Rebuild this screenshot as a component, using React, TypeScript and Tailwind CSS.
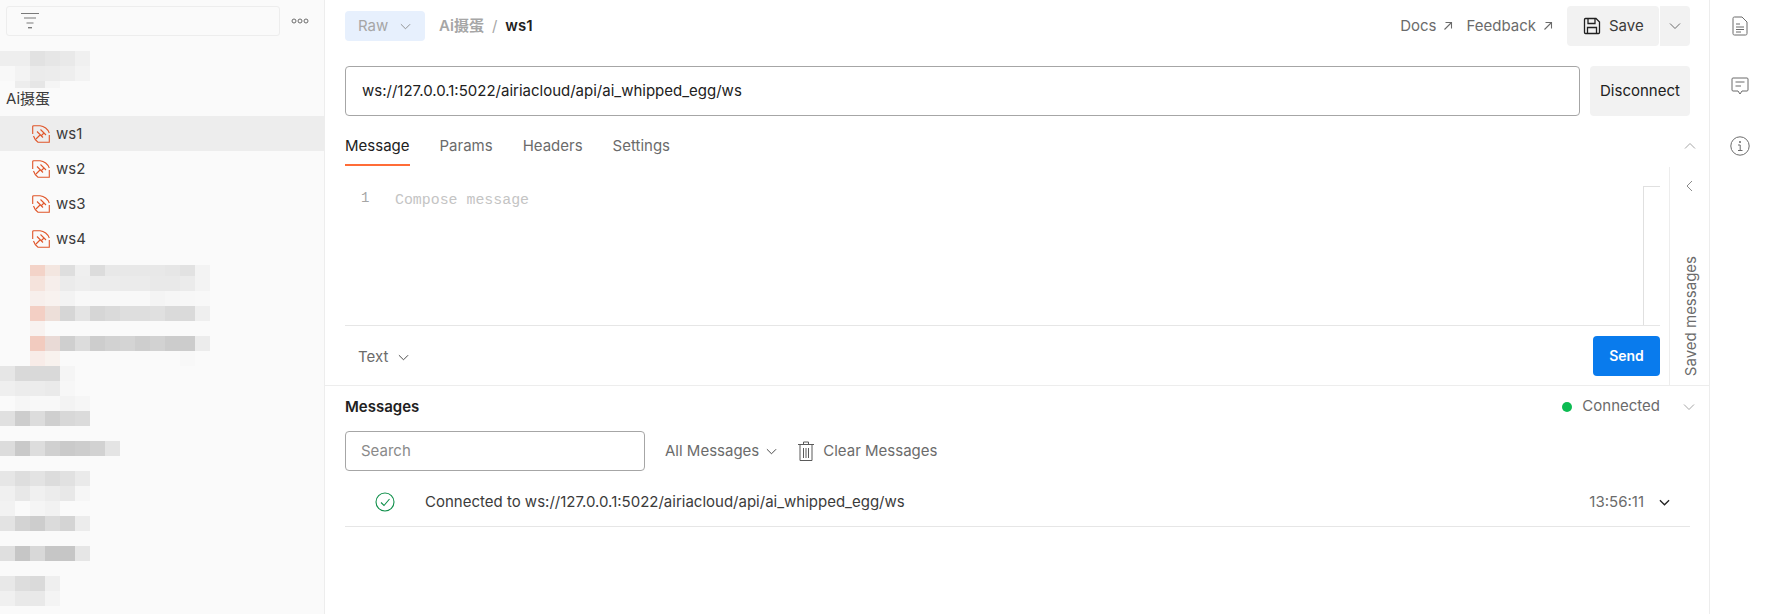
import React from "react";

const sans = "font-['Inter','Noto_Sans_CJK_SC',sans-serif]";

function Mosaic({ rows, x0, w, h, cell }: { rows: [number, number, string[]][]; x0: number; w: number; h: number; cell: number }) {
  return (
    <svg width={w} height={h} className="block shrink-0">
      {rows.map(([y, rh, cs], i) =>
        cs.map((c, j) => <rect key={i + "-" + j} x={x0 + j * cell} y={y} width={cell} height={rh} fill={c} />)
      )}
    </svg>
  );
}

const WsIcon = () => (
  <svg width="18" height="18" viewBox="0 0 18 18" fill="none" stroke="#e0562a" strokeWidth="1.1" className="shrink-0">
    <path d="M.7 9V1.7C.7 1 1 .7 1.7 .7H8C12 1 16 4 17.3 8" />
    <path d="M1.5 11C2.5 14 4 16 6 17.3H17.3V10" />
    <path d="M4 14L8 10M5 6.5L11 12.5M8.5 4.5L14 10M9 11L12 8" />
  </svg>
);

const Chevron = ({ size = 12, color = "#6b6b6b", up = false, left = false, sw = 1 }: { size?: number; color?: string; up?: boolean; left?: boolean; sw?: number }) => (
  <svg width={size} height={size} viewBox="0 0 12 12" fill="none" stroke={color} strokeWidth={sw} className="shrink-0">
    {left ? <path d="M8 1L3 6L8 11" /> : up ? <path d="M1 8.5L6 3.5L11 8.5" /> : <path d="M1 3.5L6 8.5L11 3.5" />}
  </svg>
);

const Arrow = () => (
  <svg width="10" height="10" viewBox="0 0 10 10" fill="none" stroke="#6b6b6b" strokeWidth="1.1" className="shrink-0">
    <path d="M1.5 8.5L8.5 1.5M2.5 1.5H8.5V7.5" />
  </svg>
);

const topRows: [number, number, string[]][] = [
  [0, 15, ["#eeeeee", "#eeeeee", "#e2e2e2", "#e6e6e6", "#e9e9e9", "#f0f0f0"]],
  [15, 15, ["#f8f8f8", "#f3f3f3", "#ebebeb", "#ececec", "#eeeeee", "#f3f3f3"]],
  [30, 7, ["#fafafa", "#ededed", "#e6e6e6", "#f5f5f5", "#fafafa", "#fafafa"]],
];

const p = (s: string) => s.split(" ").map((c) => "#" + c);

const midRows: [number, number, string[]][] = [
  [9, 11, p("f3d3c8 f3e6e0 dedede efefef dcdcdc e8e8e8 e8e8e8 e8e8e8 e8e8e8 e6e6e6 e2e2e2 f3f3f3")],
  [20, 15, p("f5e3dc f6eeeb ebebeb eeeeee ececec ececec ebebeb ebebeb e9e9e9 e9e9e9 ebebeb f3f3f3")],
  [35, 15, p("f7efec f8f2ef f3f3f3 f8f8f8 f8f8f8 f8f8f8 f8f8f8 f8f8f8 f4f4f4 f6f6f6 f7f7f7 f8f8f8")],
  [50, 15, p("f3cfc4 eddfd9 d6d6d6 e4e4e4 d6d6d6 dadada dedede dedede e0e0e0 dadada dadada efefef")],
  [65, 15, p("f8f2f0 fafafa fafafa fafafa fafafa fafafa fafafa fafafa fafafa fafafa fafafa fafafa")],
  [80, 15, p("f2cbbf e9dad6 cfcfcf dcdcdc cdcdcd d2d2d2 d4d4d4 cecece d2d2d2 cccccc cccccc ececec")],
  [95, 15, p("f8ece8 f8f2ee fafafa fafafa fafafa fafafa fafafa fafafa fafafa fafafa f8f8f8 fafafa")],
];

const lowRows: [number, number, string[]][] = [
  [110, 15, p("e6e6e6 d9d9d9 d9d9d9 d9d9d9 f5f5f5")],
  [125, 15, p("efefef ececec ececec eaeaea f7f7f7")],
  [140, 15, p("fafafa f6f6f6 f8f8f8 f8f8f8 f3f3f3 f6f6f6")],
  [155, 15, p("e0e0e0 cdcdcd dcdcdc cfcfcf d8d8d8 dbdbdb")],
  [185, 15, p("dcdcdc c9c9c9 dddddd d0d0d0 cacaca cdcdcd d2d2d2 e4e4e4")],
  [215, 15, p("e6e6e6 dedede e3e3e3 dcdcdc e1e1e1 eaeaea")],
  [230, 15, p("f0f0f0 e8e8e8 f0f0f0 ececec e8e8e8 f6f6f6")],
  [245, 15, p("f2f2f2 fafafa f5f5f5 f2f2f2 fafafa")],
  [260, 15, p("e3e3e3 d3d3d3 cdcdcd dbdbdb d4d4d4 ececec")],
  [290, 15, p("dfdfdf c6c6c6 d8d8d8 c6c6c6 c6c6c6 e6e6e6")],
  [320, 15, p("e8e8e8 dddddd dadada efefef")],
  [335, 15, p("f0f0f0 e9e9e9 e9e9e9 f4f4f4")],
];

function Sidebar() {
  return (
    <aside className="w-[325px] shrink-0 h-full flex flex-col bg-[#fafafa] border-r border-[#ededed] overflow-hidden">
      <div className="flex items-center pt-[6px] pl-[6px]">
        <div className="w-[274px] h-[30px] border border-[#ededed] rounded-[3px] flex items-center pl-[14px]">
          <svg width="18" height="16" viewBox="0 0 18 16" fill="none" stroke="#7a7a7a" strokeWidth="1">
            <path d="M0 .5H18M3 5H15M5.5 10H12.5" />
            <path d="M7 14.7H11" strokeWidth="1.4" />
          </svg>
        </div>
        <svg width="18" height="6" viewBox="0 0 18 6" fill="none" stroke="#6b6b6b" className="ml-[11px]">
          <circle cx="3" cy="3" r="2" />
          <circle cx="9" cy="3" r="2" />
          <circle cx="15" cy="3" r="2" />
        </svg>
      </div>
      <div className="mt-[15px]">
        <Mosaic rows={topRows} x0={0} w={90} h={37} cell={15} />
      </div>
      <div className="h-[28px] flex items-center pl-[6px] pb-[6px] text-[15px] text-[#3b3b3b]">Ai摄蛋</div>
      {["ws1", "ws2", "ws3", "ws4"].map((n, i) => (
        <div key={n} className={"h-[35px] flex items-center pl-[32px] gap-[6px] text-[15px] text-[#3b3b3b] " + (i === 0 ? "bg-[#ededed]" : "")}>
          <WsIcon />
          <span className="pt-[1px]">{n}</span>
        </div>
      ))}
      <svg width="324" height="358" className="block shrink-0">
        {midRows.map(([y, rh, cs], i) =>
          cs.map((c, j) => <rect key={"m" + i + j} x={30 + j * 15} y={y} width={15} height={rh} fill={c} />)
        )}
        {lowRows.map(([y, rh, cs], i) =>
          cs.map((c, j) => <rect key={"l" + i + j} x={j * 15} y={y} width={15} height={rh} fill={c} />)
        )}
      </svg>
    </aside>
  );
}

function TopBar() {
  return (
    <div className="flex items-center h-[40px] mt-[6px]">
      <div className="w-[80px] h-[30px] rounded-[4px] bg-[#e7f0fd] flex items-center pl-[13px] gap-[12px] text-[15px] text-[#a6a6a6]">
        <span className="pt-[1px]">Raw</span> <Chevron size={11} color="#8a8a8a" />
      </div>
      <div className="ml-[14px] flex items-center pt-[1px] text-[15px] font-semibold">
        <span className="text-[#a6a6a6]">Ai摄蛋</span>
        <span className="text-[#a6a6a6] mx-[8px] font-normal">/</span>
        <span className="text-[#212121]">ws1</span>
      </div>
      <div className="ml-auto flex items-center text-[15px] text-[#6b6b6b]">
        <span className="pt-[1px]">Docs</span>
        <span className="ml-[6px]"><Arrow /></span>
        <span className="ml-[14px] pt-[1px]">Feedback</span>
        <span className="ml-[7px]"><Arrow /></span>
      </div>
      <div className="ml-[14px] w-[92px] h-[40px] rounded-[4px] bg-[#f2f2f2] flex items-center pl-[16px] gap-[8px] text-[15px] text-[#3b3b3b]">
        <svg width="18" height="18" viewBox="0 0 18 18" fill="none" stroke="#212121" strokeWidth="1.3">
          <path d="M1.5 2.5C1.5 1.9 1.9 1.5 2.5 1.5H13L16.5 5V15.5C16.5 16.1 16.1 16.5 15.5 16.5H2.5C1.9 16.5 1.5 16.1 1.5 15.5Z" />
          <path d="M5 1.5V6.5H12V1.5M4.5 16.5V10.5H13.5V16.5" />
        </svg>
        Save
      </div>
      <div className="ml-[1px] w-[30px] h-[40px] rounded-r-[4px] bg-[#f2f2f2] flex items-center justify-center">
        <Chevron size={12} />
      </div>
    </div>
  );
}

function UrlRow() {
  return (
    <div className="flex mt-[20px] h-[50px] gap-[10px]">
      <div className="flex-1 border border-[#a6a6a6] rounded-[4px] flex items-center pl-[16px] pt-[1px] text-[15px] text-[#212121]">
        ws://127.0.0.1:5022/airiacloud/api/ai_whipped_egg/ws
      </div>
      <div className="w-[100px] rounded-[4px] bg-[#f2f2f2] flex items-center justify-center text-[15px] text-[#212121]">
        Disconnect
      </div>
    </div>
  );
}

function Tabs() {
  return (
    <div className="flex h-[51px] text-[15px] text-[#6b6b6b] gap-[30px] pt-[19px]">
      <div className="h-[31px] border-b-2 border-[#ff6c37] text-[#212121]">Message</div>
      <div>Params</div>
      <div>Headers</div>
      <div>Settings</div>
      <div className="ml-auto mr-[-6px] pt-[5px]">
        <Chevron size={12} color="#a6a6a6" up />
      </div>
    </div>
  );
}

function Composer() {
  return (
    <div className="flex h-[219px] border-b border-[#ededed]">
      <div className="flex-1 min-w-0 pl-[20px] pr-[9px] flex flex-col">
        <div className="h-[159px] flex border-b border-[#e6e6e6]">
          <div className="pl-[16px] pt-[21px] text-[14px] leading-[20px] text-[#a6a6a6] font-['Liberation_Mono',monospace] w-[50px]">1</div>
          <div className="pt-[23px] text-[14.9px] leading-[20px] text-[#c4c4c4] font-['Liberation_Mono',monospace]">Compose message</div>
          <div className="ml-auto mt-[19px] w-[17px] border-l border-t border-[#e0e0e0]" />
        </div>
        <div className="flex-1 flex items-center justify-between">
          <div className="flex items-center pl-[13px] pt-[3px] gap-[10px] text-[15px] text-[#6b6b6b]">
            Text <Chevron size={11} color="#3b3b3b" />
          </div>
          <div className="w-[67px] h-[40px] rounded-[4px] bg-[#097bed] text-white text-[14px] font-semibold flex items-center justify-center">
            Send
          </div>
        </div>
      </div>
      <div className="w-[40px] border-l border-[#ededed] flex flex-col items-center justify-between pt-[13px] pb-[9px]">
        <Chevron size={12} color="#8a8a8a" left />
        <div className="[writing-mode:vertical-rl] rotate-180 ml-[3px] text-[15px] text-[#6b6b6b]">Saved messages</div>
      </div>
    </div>
  );
}

function Messages() {
  return (
    <div className="pl-[20px] pr-[19px]">
      <div className="flex items-center h-[41px] mr-[-19px]">
        <span className="pt-[1px] text-[15px] font-semibold text-[#212121]">Messages</span>
        <span className="ml-auto w-[10px] h-[10px] rounded-full bg-[#0cbb52]" />
        <span className="ml-[10px] text-[15px] text-[#6b6b6b]">Connected</span>
        <span className="ml-[23px] mr-[14px]"><Chevron size={12} color="#a6a6a6" /></span>
      </div>
      <div className="flex items-center h-[40px] mt-[4px]">
        <div className="w-[300px] h-[40px] border border-[#a6a6a6] rounded-[4px] flex items-center pl-[15px] pt-[1px] text-[15px] text-[#8a8a8a]">
          Search
        </div>
        <span className="ml-[20px] text-[15px] text-[#6b6b6b]">All Messages</span>
        <span className="ml-[7px]"><Chevron size={11} color="#3b3b3b" /></span>
        <svg width="16" height="20" viewBox="0 0 16 20" fill="none" stroke="#5a5a5a" strokeWidth="1" className="ml-[21px]">
          <path d="M0 3.5H16M5.5 3V1H10.5V3M2 4V19.5H14V4M5.5 7V17M8 7V17M10.5 7V17" />
        </svg>
        <span className="ml-[9px] text-[15px] text-[#6b6b6b]">Clear Messages</span>
      </div>
      <div className="flex items-center h-[56px] pt-[7px] border-b border-[#e6e6e6]">
        <svg width="20" height="20" viewBox="0 0 20 20" fill="none" stroke="#0f8f4a" strokeWidth="1.1" className="ml-[30px]">
          <circle cx="10" cy="10" r="9" />
          <path d="M6 10.5L9 13.5L14.5 7" />
        </svg>
        <span className="ml-[30px] text-[15px] text-[#3b3b3b]">Connected to ws://127.0.0.1:5022/airiacloud/api/ai_whipped_egg/ws</span>
        <span className="ml-auto text-[15px] text-[#6b6b6b]">13:56:11</span>
        <span className="ml-[15px] mr-[20px]"><Chevron size={11} color="#212121" sw={1.4} /></span>
      </div>
    </div>
  );
}

function Rail() {
  return (
    <aside className="w-[61px] shrink-0 h-full border-l border-[#ededed] flex flex-col items-center pt-[16px]">
      <svg width="16" height="20" viewBox="0 0 16 20" fill="none" stroke="#6b6b6b" strokeWidth="1">
        <path d="M1 2.5C1 1.5 1.5 1 2.5 1H10L15 6V17.5C15 18.5 14.5 19 13.5 19H2.5C1.5 19 1 18.5 1 17.5Z" />
        <path d="M4 8H8M4 11H12M4 13.5H12M4 16H9" />
      </svg>
      <svg width="18" height="18" viewBox="0 0 18 18" fill="none" stroke="#6b6b6b" strokeWidth="1" className="mt-[41px]">
        <path d="M1 2C1 1.4 1.4 1 2 1H16C16.6 1 17 1.4 17 2V13C17 13.6 16.6 14 16 14H11L9 17L7 14H2C1.4 14 1 13.6 1 13Z" />
        <path d="M4.5 5H13.5M4.5 9H10" />
      </svg>
      <svg width="20" height="20" viewBox="0 0 20 20" fill="none" stroke="#6b6b6b" strokeWidth="1" className="mt-[41px]">
        <circle cx="10" cy="10" r="9.2" />
        <path d="M8 9H10.2V14.5M8 14.5H12.5" />
        <circle cx="10" cy="6" r="0.6" fill="#6b6b6b" />
      </svg>
    </aside>
  );
}

export default function App() {
  return (
    <div className={"flex w-[1770px] h-[614px] overflow-hidden bg-white " + sans}>
      <Sidebar />
      <main className="flex-1 min-w-0 h-full flex flex-col">
        <div className="pl-[20px] pr-[19px]">
          <TopBar />
          <UrlRow />
          <Tabs />
        </div>
        <Composer />
        <Messages />
      </main>
      <Rail />
    </div>
  );
}
